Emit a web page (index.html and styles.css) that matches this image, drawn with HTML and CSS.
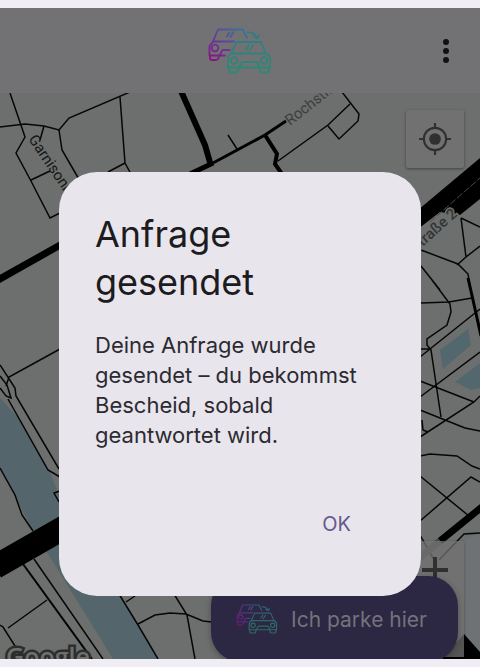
FILE: index.html
```
<!DOCTYPE html>
<html lang="de">
<head>
    <meta charset="UTF-8">
    <meta name="viewport" content="width=device-width, initial-scale=1.0">
    <title>Anfrage gesendet</title>
    <link rel="stylesheet" href="styles.css">
</head>
<body>
    <header class="topbar">
        <svg class="logo" viewBox="0 0 64 46" role="img" aria-label="Logo">
            <defs>
                <linearGradient id="backCar" gradientUnits="userSpaceOnUse" x1="6" y1="32" x2="34" y2="2">
                    <stop offset="0" stop-color="#861583"/>
                    <stop offset="0.55" stop-color="#5c46a0"/>
                    <stop offset="1" stop-color="#3a7396"/>
                </linearGradient>
                <linearGradient id="frontCar" gradientUnits="userSpaceOnUse" x1="0" y1="4" x2="0" y2="45">
                    <stop offset="0" stop-color="#337a86"/>
                    <stop offset="1" stop-color="#2b8a74"/>
                </linearGradient>
                <symbol id="cars" viewBox="0 0 64 46">
                    <g fill="none" stroke="url(#backCar)" stroke-width="1.8" stroke-linecap="round" stroke-linejoin="round">
                        <path d="M26 13.5H5L10 1.5H35L39 10"/>
                        <path d="M5 13.5L1.5 18V27.5H17"/>
                        <path d="M2 27.5V30Q2 32 4 32H8Q10 32 10.5 30L11.5 27.5L14.5 22H22"/>
                        <circle cx="7" cy="20" r="3.3"/>
                        <path d="M19 8.5L21.5 4.5M22.5 9L25.5 4"/>
                    </g>
                    <g fill="none" stroke="url(#frontCar)" stroke-width="1.8" stroke-linecap="round" stroke-linejoin="round">
                        <path d="M23.5 25.5L28.5 14H53L58 25.5Z"/>
                        <path d="M23.5 25.5Q20 27 20 31V39.5H62V31Q62 27 58 25.5"/>
                        <path d="M21 39.5V42Q21 44.5 23 44.5H28Q30 44.5 30 42L31 39.5L34 34H49L52 39.5V42Q52 44.5 54 44.5H59Q61 44.5 61 42V39.5"/>
                        <circle cx="26" cy="32.5" r="3.3"/>
                        <circle cx="56" cy="32.5" r="3.3"/>
                        <path d="M38 21.5L41 17M41.5 22.5L45 17.5"/>
                        <path d="M40 4.5Q46 4 49 10M45.5 8.5L49.5 10.5L51 7"/>
                    </g>
                </symbol>
            </defs>
            <use href="#cars"/>
        </svg>
        <button type="button" class="menu-button" aria-label="Menü">
            <svg viewBox="0 0 8 26" width="8" height="26">
                <circle cx="4" cy="4" r="3"/>
                <circle cx="4" cy="13" r="3"/>
                <circle cx="4" cy="22" r="3"/>
            </svg>
        </button>
    </header>

    <main class="map">
        <svg class="map-canvas" viewBox="0 93 480 566" preserveAspectRatio="xMidYMid slice" aria-hidden="true">
            <!-- water and ground -->
            <path class="water" d="M0 398L22 422L50 472L62 503L120 596L158 659H113L50 557L33 531L0 468Z"/>
            <path class="pond" d="M440 350L468 329L471 345L443 369ZM455 382L480 363V388L471 390Z"/>
            <path class="district" d="M464 540L480 534V652L464 634Z"/>

            <!-- small streets -->
            <g class="street">
                <path d="M10 93L25 137L16 153L31 181L50 218L60 213M31 180L50 171"/>
                <path d="M0 127L25 124L44 126L59 130L69 118L130 92M44 126L40 140"/>
                <path d="M59 130L62 150L80 181M120 97L125 163L131 174M125 163L108 172"/>
                <path d="M228 135L237 149M278 161L328 125L350 104M342 92L359 114L358 121L339 139L328 126"/>
                <path d="M421 250L458 264L468 274L471 292M461 218L466 257L457 265M461 218L480 227M466 257L480 246M421 266L440 290M432 280L450 304L451 312L447 325L427 339L427 345L431 350L441 417"/>
                <path d="M421 303L449 302L472 298M420 349H431M420 357L475 313L480 309M420 397L480 352M420 381L474 402M420 410L465 428L480 431M420 437L474 402L480 396M422 420L423 430L428 432"/>
                <path d="M420 456L430 454L457 456L472 466L480 469M420 476L469 516M420 521L471 477L480 482M439 560L464 534L480 533M420 535L437 565"/>
                <path d="M0 365L15 388L16 396L59 469M0 376L7 385L11 398L6 396L0 388M8 399L48 470L60 477M6 386L9 377L60 349M60 491L54 493L59 502"/>
                <path d="M0 468L15 495L22 515L33 531M34 559L103 659M47 600L8 628M0 625L3 627L22 657"/>
                <path d="M119 594L138 625L158 659M126 602L135 596M138 624L155 615L170 613L186 614L203 621L212 622M174 594L187 615L195 659"/>
            </g>

            <!-- main roads -->
            <g class="road">
                <path stroke-width="6" d="M181 91L205 145L211 166"/>
                <path stroke-width="5" d="M190 174L213 163"/>
                <path stroke-width="3" d="M213 163L265 135L286 121M468 278L473 300L481 336"/>
                <path stroke-width="4" d="M265 135L277 154L275 164L282 174"/>
                <path stroke-width="7" d="M-2 280L62 244M440 541L482 507"/>
                <path class="faded" stroke-width="7" d="M418 559L440 541"/>
                <path stroke-width="24" d="M-5 567L65 527"/>
                <path stroke-width="2" d="M23 564L92 659"/>
            </g>
            <path d="M418 210L480 158V199L460 215L440 212L418 229Z"/>
            <path class="lane" d="M430 222L480 178"/>
            <path d="M464 634L480 652V659H442Z"/>

            <!-- labels -->
            <g class="label">
                <text class="label-dark" transform="translate(28 139) rotate(56)">Garnisonk</text>
                <text transform="translate(290 126) rotate(-38)">Rochstr.</text>
                <text class="label-halo" text-anchor="end" transform="translate(458 215) rotate(-42)">Straße 2</text>
            </g>
            <text class="google" x="6" y="666">Google</text>
        </svg>

        <button type="button" class="map-button locate" aria-label="Mein Standort">
            <svg viewBox="0 0 32 32" width="34" height="34">
                <circle cx="16" cy="16" r="10.5" fill="none" stroke="#303030" stroke-width="2"/>
                <circle cx="16" cy="16" r="5.5" fill="#303030"/>
                <path d="M16 1V6M16 26V31M1 16H6M26 16H31" stroke="#303030" stroke-width="2"/>
            </svg>
        </button>

        <div class="zoom">
            <button type="button" aria-label="Vergrößern">
                <svg viewBox="0 0 26 26" width="26" height="26"><path d="M13 0V26M0 13H26" stroke="#303030" stroke-width="4"/></svg>
            </button>
            <button type="button" aria-label="Verkleinern"></button>
        </div>

        <button type="button" class="park-button">
            <svg class="park-icon" viewBox="0 0 64 46" aria-hidden="true"><use href="#cars"/></svg>
            Ich parke hier
        </button>
    </main>

    <div class="overlay">
        <div class="dialog" role="alertdialog" aria-labelledby="dialogTitle" aria-describedby="dialogText">
            <h1 id="dialogTitle">Anfrage gesendet</h1>
            <p id="dialogText">Deine Anfrage wurde gesendet – du bekommst Bescheid, sobald geantwortet wird.</p>
            <div class="actions">
                <button type="button" class="ok-button">OK</button>
            </div>
        </div>
    </div>
</body>
</html>
```

FILE: styles.css
```
* {
    box-sizing: border-box;
}
body {
    display: flex;
    flex-direction: column;
    min-height: 100vh;
    margin: 0;
    padding: 8px 0;
    background-color: #f1edf4;
    font-family: 'Inter', 'Roboto', sans-serif;
}
button {
    display: flex;
    align-items: center;
    justify-content: center;
    padding: 0;
    border: none;
    background: none;
    font-family: inherit;
    cursor: pointer;
}

/* Top bar */
.topbar {
    display: grid;
    grid-template-columns: 1fr 64px 1fr;
    align-items: center;
    height: 85px;
    padding: 0 16px;
    background-color: #727173;
}
.logo {
    grid-column: 2;
    width: 64px;
    height: 46px;
}
.menu-button {
    justify-self: end;
    width: 36px;
    height: 48px;
    fill: #111;
}

/* Map */
.map {
    position: relative;
    flex: 1;
    overflow: hidden;
    background-color: #6c6f6d;
}
.map-canvas {
    position: absolute;
    width: 100%;
    height: 100%;
}
.water {
    fill: #54666b;
}
.pond {
    fill: #52676e;
}
.district {
    fill: #6f7275;
}
.street {
    fill: none;
    stroke: #060606;
    stroke-width: 1.5;
}
.road {
    fill: none;
    stroke: #000;
}
.road .faded {
    stroke: #4e4f4e;
}
.lane {
    stroke: #4a4a4a;
    stroke-dasharray: 7 2;
}
.label {
    font-family: 'Roboto', sans-serif;
    font-size: 15px;
    fill: #3c3e3f;
}
.label-dark {
    fill: #151515;
}
.label-halo {
    fill: #333536;
    font-weight: 500;
    stroke: #6c6f6d;
    stroke-width: 3;
    paint-order: stroke;
}
.google {
    font-family: 'Open Sans', sans-serif;
    font-size: 25px;
    font-weight: 600;
    fill: #6c6f6d;
    stroke: #2c2d2c;
    stroke-width: 5;
    paint-order: stroke;
}
.map-button {
    position: absolute;
    width: 58px;
    height: 58px;
    border-radius: 2px;
    background-color: #717171;
    box-shadow: 0 1px 3px rgba(0,0,0,0.4);
}
.locate {
    top: 17px;
    right: 16px;
}
.zoom {
    position: absolute;
    right: 16px;
    bottom: 2px;
    background-color: rgba(113,113,113,0.75);
    box-shadow: 0 1px 3px rgba(0,0,0,0.3);
}
.zoom button {
    width: 58px;
    height: 58px;
}
.park-button {
    position: absolute;
    right: 22px;
    bottom: -3px;
    gap: 13px;
    width: 247px;
    height: 86px;
    padding-right: 6px;
    border-radius: 30px;
    background-color: #2c2743;
    box-shadow: 0 2px 6px rgba(0,0,0,0.3);
    color: #75727b;
    font-size: 21px;
}
.park-icon {
    width: 42px;
    height: 30px;
    opacity: 0.7;
}

/* Dialog */
.overlay {
    position: absolute;
    top: 0;
    left: 0;
    width: 100%;
    padding: 172px 59px 0;
}
.dialog {
    padding: 38px 36px 48px;
    border-radius: 38px;
    background-color: #e8e5ec;
}
.dialog h1 {
    margin: 0 0 24px;
    color: #1c1b20;
    font-size: 36px;
    font-weight: 400;
    line-height: 48px;
}
.dialog p {
    margin: 0;
    color: #2c2a31;
    font-size: 22px;
    line-height: 30px;
}
.actions {
    display: flex;
    justify-content: flex-end;
    margin-top: 50px;
}
.ok-button {
    height: 48px;
    padding: 0 34px;
    color: #65598c;
    font-size: 20px;
}
```
